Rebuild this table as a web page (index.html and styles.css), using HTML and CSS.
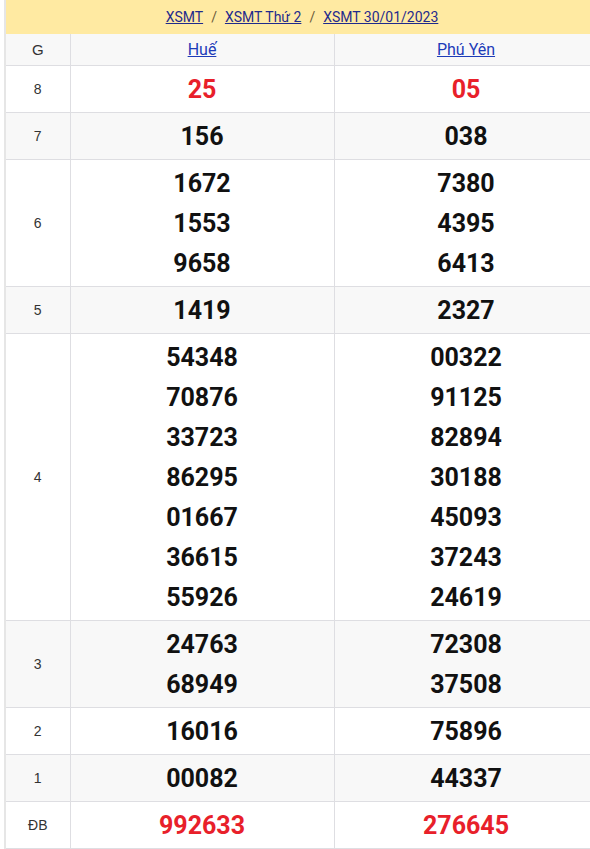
FILE: index.html
```html
<!DOCTYPE html>
<html lang="vi">
<head>
<meta charset="utf-8">
<title>XSMT 30/01/2023</title>
<link rel="stylesheet" href="styles.css">
</head>
<body>
<div class="page">
  <nav class="crumb">
    <a href="#">XSMT</a><span class="sep">/</span><a href="#">XSMT Thứ 2</a><span class="sep">/</span><a href="#">XSMT 30/01/2023</a>
  </nav>
  <table class="kq">
    <colgroup><col class="c-g"><col class="c-p"><col class="c-p"></colgroup>
    <tr class="alt head"><td class="lbl">G</td><td><a href="#">Huế</a></td><td><a href="#">Phú Yên</a></td></tr>
    <tr><td class="lbl">8</td><td class="num red"><div>25</div></td><td class="num red"><div>05</div></td></tr>
    <tr class="alt"><td class="lbl">7</td><td class="num"><div>156</div></td><td class="num"><div>038</div></td></tr>
    <tr><td class="lbl">6</td><td class="num"><div>1672</div><div>1553</div><div>9658</div></td><td class="num"><div>7380</div><div>4395</div><div>6413</div></td></tr>
    <tr class="alt"><td class="lbl">5</td><td class="num"><div>1419</div></td><td class="num"><div>2327</div></td></tr>
    <tr><td class="lbl">4</td><td class="num"><div>54348</div><div>70876</div><div>33723</div><div>86295</div><div>01667</div><div>36615</div><div>55926</div></td><td class="num"><div>00322</div><div>91125</div><div>82894</div><div>30188</div><div>45093</div><div>37243</div><div>24619</div></td></tr>
    <tr class="alt"><td class="lbl">3</td><td class="num"><div>24763</div><div>68949</div></td><td class="num"><div>72308</div><div>37508</div></td></tr>
    <tr><td class="lbl">2</td><td class="num"><div>16016</div></td><td class="num"><div>75896</div></td></tr>
    <tr class="alt"><td class="lbl">1</td><td class="num"><div>00082</div></td><td class="num"><div>44337</div></td></tr>
    <tr><td class="lbl">ĐB</td><td class="num red"><div>992633</div></td><td class="num red"><div>276645</div></td></tr>
  </table>
</div>
</body>
</html>
```
FILE: styles.css
```css
html, body {
  margin: 0;
  padding: 0;
  background: #fff;
  overflow: hidden;
}
body {
  font-family: Roboto, "Liberation Sans", Arial, sans-serif;
  color: #111;
}
.page {
  margin-left: 4px;
  width: 592px;
  border-left: 2px solid #e6e6e6;
  border-bottom: 1px solid #e0e0e0;
}
.crumb {
  height: 34px;
  background: #ffeaa2;
  display: flex;
  align-items: center;
  justify-content: center;
  font-size: 14px;
}
.crumb a {
  color: #1f2a8c;
  text-decoration: underline;
}
.crumb .sep {
  color: #6b5a3a;
  margin: 0 8px;
}
.kq {
  width: 592px;
  border-collapse: collapse;
  table-layout: fixed;
}
.c-g { width: 64px; }
.c-p { width: 264px; }
.kq td {
  border: 1px solid #dedee2;
  text-align: center;
  vertical-align: middle;
  padding: 4px 0 2px;
}
.kq tr:first-child td { border-top: none; }
.kq td:first-child { border-left: none; }
.kq tr.alt td { background: #f8f8f8; }
.kq tr.head td {
  height: 25px;
  font-size: 16px;
  padding: 3px 0 3px;
}
.kq tr.head a {
  color: #1d3cb8;
  text-decoration: underline;
}
.kq td.lbl {
  font-family: "Liberation Sans", Arial, sans-serif;
  font-size: 14px;
  color: #333;
  padding: 3px 0;
}
.kq tr.head td.lbl {
  font-size: 15px;
}
.num div {
  font-size: 25px;
  font-weight: 700;
  line-height: 40px;
  color: #111;
}
.num.red div {
  color: #e8202a;
}
```
